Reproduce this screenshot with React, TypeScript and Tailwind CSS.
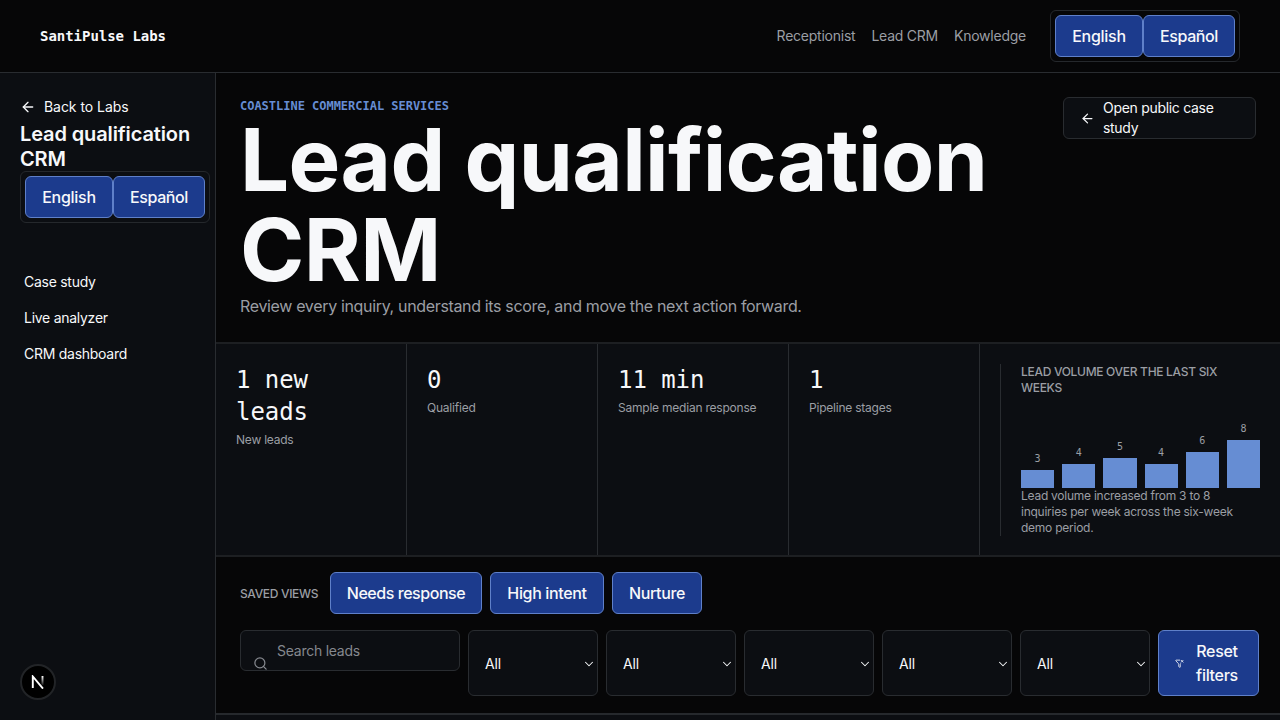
import type { ReactNode } from 'react';
import { ArrowLeft, ChevronDown, FunnelX, Search } from 'lucide-react';

const stats = [
  { value: '1 new leads', label: 'New leads' },
  { value: '0', label: 'Qualified' },
  { value: '11 min', label: 'Sample median response' },
  { value: '1', label: 'Pipeline stages' },
];

const weeks = [3, 4, 5, 4, 6, 8];

const filters = ['stage', 'source', 'score', 'owner', 'service'];

const Button = ({ className, children }: { className: string; children: ReactNode }) => (
  <button
    className={`flex shrink-0 items-center justify-center rounded-md border border-[#5f80c9] bg-[#1c3b8d] text-base font-[450] text-[#f7f8fa] ${className}`}
  >
    {children}
  </button>
);

const LanguageSwitch = () => (
  <div className="flex h-[52px] w-[190px] shrink-0 rounded-md border border-[#25282c] p-1">
    <Button className="h-[42px] w-[88px] tracking-[-0.28px]">English</Button>
    <Button className="h-[42px] w-[92px] tracking-[-0.4px]">Español</Button>
  </div>
);

const Sidebar = () => (
  <aside className="relative w-[216px] shrink-0 border-r border-[#292c30] bg-[#0c0e12] px-5 pt-6">
    <a className="mb-[5px] flex h-5 items-center gap-2 text-sm tracking-[-0.05px]">
      <ArrowLeft className="h-4 w-4" />
      Back to Labs
    </a>
    <h2 className="h-[49px] w-[180px] text-xl leading-[25px] font-semibold tracking-[-0.12px]">
      Lead qualification CRM
    </h2>
    <LanguageSwitch />
    <nav className="mt-[41px] flex flex-col px-1 text-sm tracking-[-0.27px]">
      <a className="flex h-9 items-center">Case study</a>
      <a className="flex h-9 items-center">Live analyzer</a>
      <a className="flex h-9 items-center">CRM dashboard</a>
    </nav>
    {/* Dev tools badge */}
    <div className="absolute bottom-5 left-5 flex h-9 w-9 items-center justify-center rounded-full border-2 border-[#222427] bg-black">
      <svg width="14" height="14" viewBox="0 0 14 14" fill="none">
        <defs>
          <linearGradient id="stem" x1="0" y1="1" x2="0" y2="10" gradientUnits="userSpaceOnUse">
            <stop stopColor="#fff" />
            <stop offset="1" stopColor="#fff" stopOpacity="0.1" />
          </linearGradient>
        </defs>
        <path d="M1.8 13V1.5L12 13.6" stroke="#fff" strokeWidth="1.9" />
        <path d="M11.5 1v9" stroke="url(#stem)" strokeWidth="1.9" />
      </svg>
    </div>
  </aside>
);

const VolumeChart = () => (
  <div className="h-[172px] border-l border-[#292c30] pl-5 text-xs leading-4 text-[#9b9ea4]">
    <h3 className="h-8 w-[239px] font-medium tracking-[-0.3px]">
      LEAD VOLUME OVER THE LAST SIX WEEKS
    </h3>
    <div className="flex h-[92px] items-end gap-2">
      {weeks.map((count, i) => (
        <div key={i} className="flex flex-1 flex-col items-center">
          <span className="mb-[3px] font-['DejaVu_Sans_Mono',monospace] text-[10px]">{count}</span>
          <div className="w-full bg-[#668dd3]" style={{ height: count * 6 }} />
        </div>
      ))}
    </div>
    <p className="w-[225px] tracking-[-0.25px]">
      Lead volume increased from 3 to 8 inquiries per week across the six-week demo period.
    </p>
  </div>
);

const App = () => {
  return (
    <div className="flex h-screen flex-col overflow-hidden bg-[#060607] font-[Inter,sans-serif] text-[#f7f8fa]">
      <header className="flex h-[73px] shrink-0 items-center justify-between border-b border-[#292c30] px-10">
        <span className="font-['DejaVu_Sans_Mono',monospace] text-sm font-bold tracking-[-0.03px]">
          SantiPulse Labs
        </span>
        <div className="flex items-center gap-6">
          <nav className="flex gap-4 text-sm tracking-[-0.24px] text-[#9b9ea4]">
            <a>Receptionist</a>
            <a>Lead CRM</a>
            <a>Knowledge</a>
          </nav>
          <LanguageSwitch />
        </div>
      </header>

      <div className="flex min-h-0 flex-1">
        <Sidebar />

        <main className="flex min-w-0 flex-1 flex-col">
          {/* Hero */}
          <section className="flex h-[271px] shrink-0 items-start justify-between border-b-2 border-[#1d1f22] px-6 pt-6">
            <div>
              <p className="font-['DejaVu_Sans_Mono',monospace] text-xs leading-[18px] font-bold tracking-[-0.02px] text-[#668dd3]">
                COASTLINE COMMERCIAL SERVICES
              </p>
              <h1 className="h-[179px] w-[780px] text-[87px] leading-[90px] font-bold tracking-[-0.65px]">
                Lead qualification CRM
              </h1>
              <p className="text-base leading-6 tracking-[-0.34px] text-[#9b9ea4]">
                Review every inquiry, understand its score, and move the next action forward.
              </p>
            </div>
            <a className="flex h-[42px] w-[193px] items-center gap-2 rounded-md border border-[#292c30] bg-[#0c0e12] px-4 text-sm leading-5 tracking-[-0.3px]">
              <ArrowLeft className="h-[15px] w-[15px] shrink-0" />
              <span className="w-[130px]">Open public case study</span>
            </a>
          </section>

          {/* Metrics */}
          <section className="flex h-[213px] shrink-0 border-b-2 border-[#1d1f22] bg-[#0c0e12]">
            {stats.map((stat) => (
              <div key={stat.label} className="w-[191px] border-r border-[#292c30] p-5">
                <p className="w-[130px] font-['DejaVu_Sans_Mono',monospace] text-2xl leading-8 tracking-[-0.05px]">
                  {stat.value}
                </p>
                <p className="mt-1 text-xs leading-4 tracking-[-0.22px] whitespace-nowrap text-[#9b9ea4]">
                  {stat.label}
                </p>
              </div>
            ))}
            <div className="flex-1 px-5 pt-5">
              <VolumeChart />
            </div>
          </section>

          {/* Saved views and filters */}
          <section className="flex h-[158px] shrink-0 flex-col gap-4 border-b-2 border-[#26292d] px-6 pt-[15px]">
            <div className="flex h-[42px] shrink-0 items-center gap-2">
              <span className="w-[82px] pt-px text-xs font-medium tracking-[-0.33px] whitespace-nowrap text-[#9b9ea4]">
                SAVED VIEWS
              </span>
              <Button className="h-[42px] w-[152px] tracking-[-0.45px]">Needs response</Button>
              <Button className="h-[42px] w-[114px] tracking-[-0.35px]">High intent</Button>
              <Button className="h-[42px] w-[90px] tracking-[-0.35px]">Nurture</Button>
            </div>
            <div className="flex gap-2">
              <label className="flex h-[41px] w-[220px] shrink-0 gap-[9px] overflow-hidden rounded-md border border-[#292c30] bg-[#0c0e12] px-3 text-sm tracking-[-0.25px] text-[#85888e]">
                <Search className="mt-[25px] h-[15px] w-[15px] shrink-0" strokeWidth={2} />
                <span className="leading-[39px]">Search leads</span>
              </label>
              {filters.map((name) => (
                <button
                  key={name}
                  className="flex h-[66px] w-[130px] shrink-0 items-center justify-between rounded-md border border-[#292c30] bg-[#0c0e12] pt-px pr-px pl-4 text-sm tracking-[-0.2px]"
                >
                  All
                  <ChevronDown className="h-3.5 w-3.5" strokeWidth={1.8} />
                </button>
              ))}
              <Button className="h-[66px] w-[101px] gap-3 leading-6 tracking-[-0.3px]">
                <FunnelX className="-ml-1 h-[9px] w-[9px]" strokeWidth={2.2} />
                <span className="w-[43px]">Reset filters</span>
              </Button>
            </div>
          </section>
          <div className="flex-1 bg-[#0c0e12]" />
        </main>
      </div>
    </div>
  );
};

export default App;
